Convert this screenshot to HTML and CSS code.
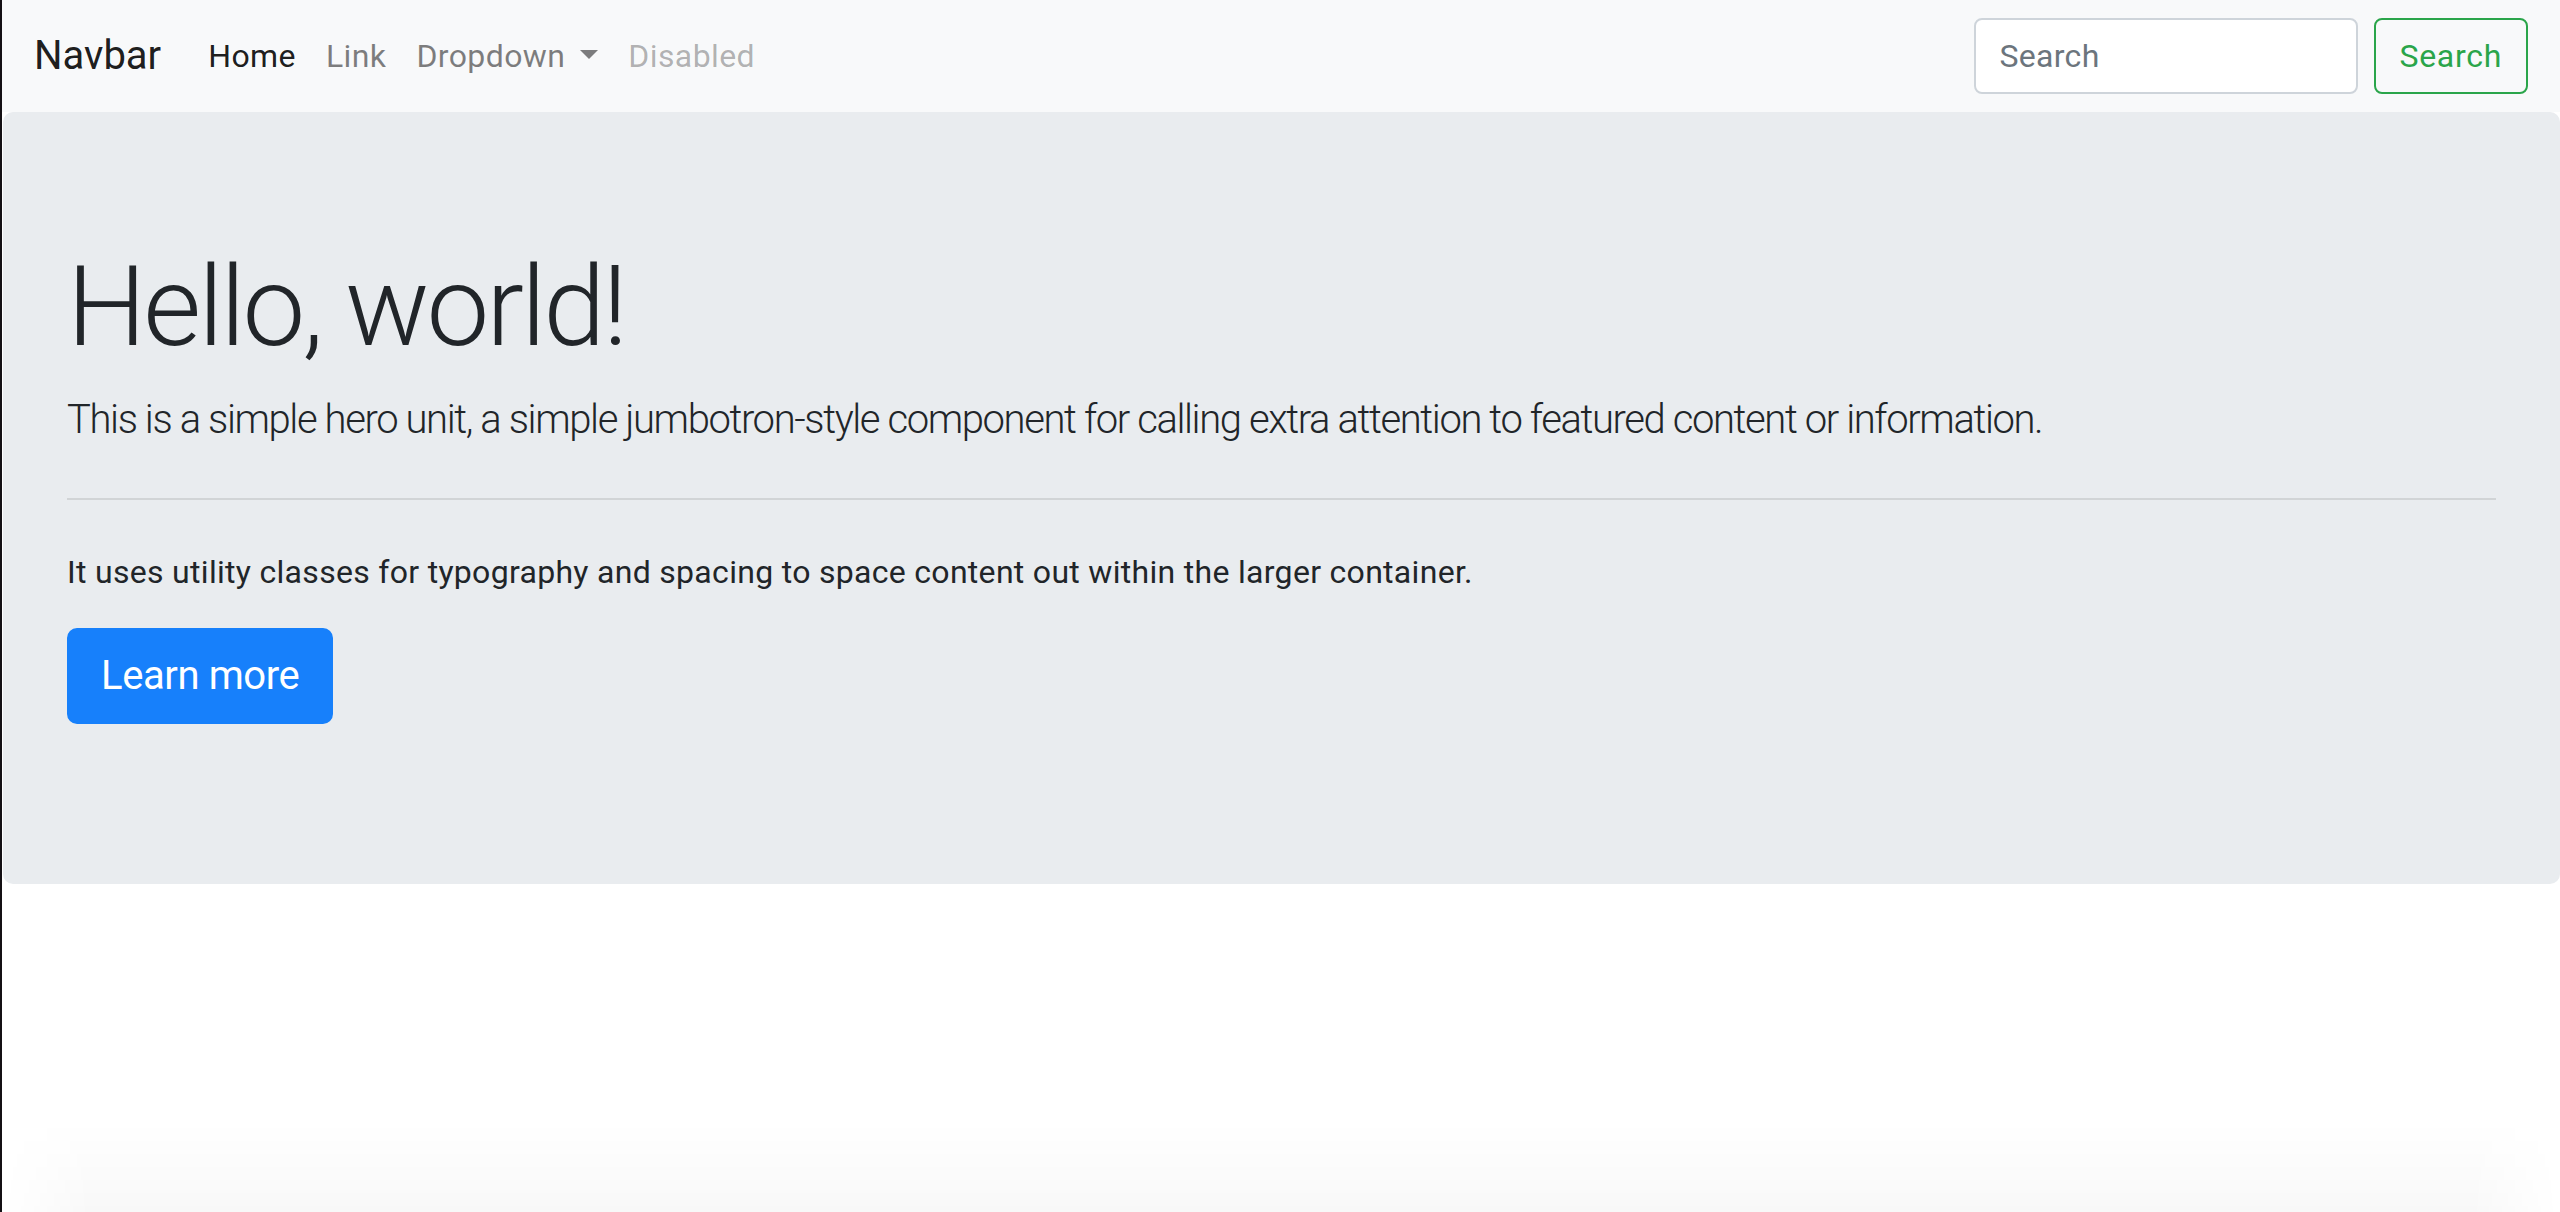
FILE: index.html
```html
<!DOCTYPE html>
<html lang="en">
<head>
<meta charset="utf-8">
<title>Navbar</title>
<link rel="stylesheet" href="styles.css">
</head>
<body>
<div class="page">
  <nav class="navbar">
    <a class="brand" href="#">Navbar</a>
    <ul class="nav">
      <li><a class="nav-link active" href="#">Home</a></li>
      <li><a class="nav-link" href="#">Link</a></li>
      <li><a class="nav-link dropdown" href="#">Dropdown</a></li>
      <li><a class="nav-link disabled" href="#">Disabled</a></li>
    </ul>
    <form class="search-form">
      <input class="search-input" type="search" placeholder="Search">
      <button class="btn-outline" type="button">Search</button>
    </form>
  </nav>
  <main class="jumbotron">
    <h1 class="display">Hello, world!</h1>
    <p class="lead">This is a simple hero unit, a simple jumbotron-style component for calling extra attention to featured content or information.</p>
    <hr class="divider">
    <p class="body-text">It uses utility classes for typography and spacing to space content out within the larger container.</p>
    <p class="action"><a class="btn-primary" href="#">Learn more</a></p>
  </main>
  <div class="bottom-shade"></div>
</div>
</body>
</html>
```

FILE: styles.css
```css
* { box-sizing: border-box; }
html, body {
  margin: 0;
  padding: 0;
  height: 100%;
  background: #fff;
}
body {
  font-family: Roboto, "Noto Sans", "Liberation Sans", sans-serif;
  color: #212529;
  font-size: 32px;
  line-height: 1.5;
  overflow: hidden;
}
.page {
  position: relative;
  min-height: 1212px;
  border-left: 2px solid #141014;
}
.navbar {
  display: flex;
  align-items: center;
  height: 112px;
  padding: 16px 32px;
  background: #f8f9fa;
}
.brand {
  font-size: 40px;
  line-height: 60px;
  padding: 10px 0;
  margin-right: 32px;
  color: rgba(0,0,0,.9);
  text-decoration: none;
}
.nav {
  display: flex;
  list-style: none;
  margin: 0;
  padding: 0;
  flex: 1;
}
.nav-link {
  display: block;
  padding: 16px 15px;
  line-height: 48px;
  letter-spacing: 0.4px;
  color: rgba(0,0,0,.5);
  text-decoration: none;
}
.nav-link.active { color: rgba(0,0,0,.9); }
.nav-link.disabled { color: rgba(0,0,0,.3); }
.nav-link.dropdown::after {
  content: "";
  display: inline-block;
  margin-left: 15px;
  vertical-align: 8px;
  border-top: 9.6px solid;
  border-left: 9.6px solid transparent;
  border-right: 9.6px solid transparent;
}
.search-form {
  display: flex;
  align-items: center;
}
.search-input {
  width: 384px;
  height: 76px;
  padding: 12px 24px;
  font: inherit;
  font-size: 32px;
  letter-spacing: 0.3px;
  color: #495057;
  background: #fff;
  border: 2px solid #ced4da;
  border-radius: 8px;
  margin-right: 16px;
  outline: none;
}
.search-input::placeholder { color: #6c757d; }
.btn-outline {
  height: 76px;
  padding: 12px 24px;
  font: inherit;
  font-size: 32px;
  letter-spacing: 0.7px;
  color: #2aa54a;
  background: transparent;
  border: 2px solid #2aa54a;
  border-radius: 8px;
}
.jumbotron {
  background: #e9ecef;
  border-radius: 10px;
  padding: 128px 64px;
  margin-left: 1px;
}
.display {
  margin: 0 0 16px;
  font-size: 112px;
  font-weight: 300;
  line-height: 1.2;
  letter-spacing: -3px;
}
.lead {
  margin: 0 0 32px;
  font-size: 40px;
  font-weight: 300;
  line-height: 60px;
  letter-spacing: -1.4px;
}
.divider {
  margin: 48px 0;
  border: 0;
  border-top: 2px solid rgba(0,0,0,.1);
}
.body-text {
  margin: 0 0 32px;
  font-size: 32px;
  line-height: 48px;
  letter-spacing: 0.3px;
}
.action {
  margin: 0 0 32px;
  font-size: 40px;
  line-height: 60px;
}
.btn-primary {
  display: inline-block;
  padding: 16px 32px;
  font-size: 40px;
  line-height: 60px;
  letter-spacing: -0.4px;
  color: #fff;
  background: #1780fb;
  border: 2px solid #1780fb;
  border-radius: 10px;
  text-decoration: none;
  vertical-align: top;
}
.bottom-shade {
  position: absolute;
  left: 0;
  right: 0;
  bottom: 0;
  height: 90px;
  background: linear-gradient(to bottom, rgba(0,0,0,0), rgba(0,0,0,.028));
  -webkit-mask-image: linear-gradient(to right, transparent 0, #000 90px, #000 calc(100% - 90px), transparent 100%);
  mask-image: linear-gradient(to right, transparent 0, #000 90px, #000 calc(100% - 90px), transparent 100%);
  pointer-events: none;
}
```
